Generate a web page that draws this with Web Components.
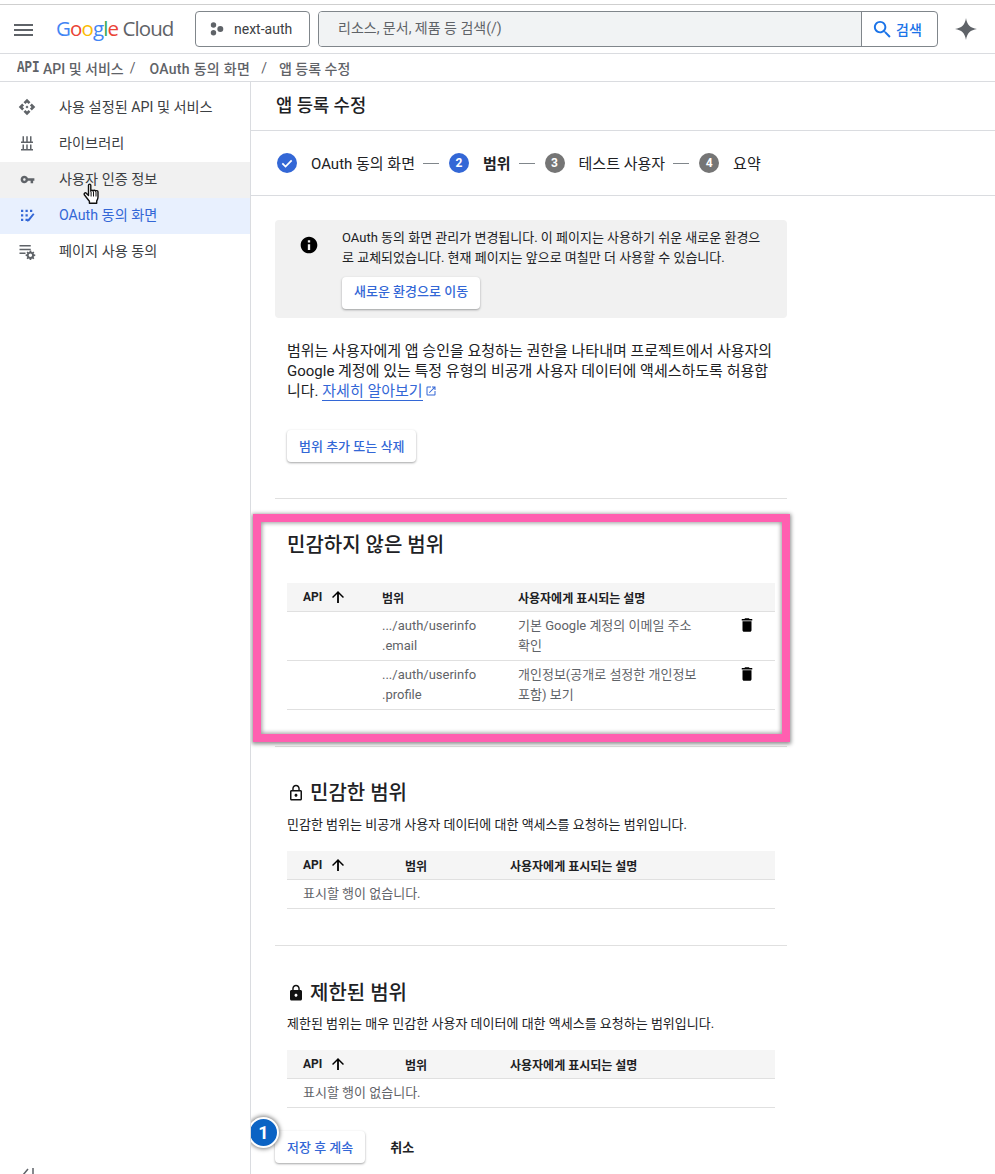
<!DOCTYPE html>
<html lang="ko">
<head>
<meta charset="utf-8">
<title>앱 등록 수정</title>
<style>
html, body { margin:0; padding:0; height:1174px; overflow:hidden; background:#fff; }
body { font-family: Roboto, "Noto Sans CJK KR", sans-serif; color:#202124; }
</style>
</head>
<body>
<gc-app>
  <gc-header slot="header"></gc-header>
  <gc-breadcrumb slot="crumbs"></gc-breadcrumb>
  <gc-sidenav slot="nav">
    <gc-nav-item icon="api">사용 설정된 API 및 서비스</gc-nav-item>
    <gc-nav-item icon="library">라이브러리</gc-nav-item>
    <gc-nav-item icon="key" size="15" hovered>사용자 인증 정보</gc-nav-item>
    <gc-nav-item icon="consent" active>OAuth 동의 화면</gc-nav-item>
    <gc-nav-item icon="agreements">페이지 사용 동의</gc-nav-item>
  </gc-sidenav>
  <gc-edit-page slot="main"></gc-edit-page>
</gc-app>

<script>
const ICONS = {
  api: '<path d="M14 12l-2 2-2-2 2-2 2 2zm-2-6l2.12 2.12 2.5-2.5L12 1 7.38 5.62l2.5 2.5L12 6zm-6 6l2.12-2.12-2.5-2.5L1 12l4.62 4.62 2.5-2.5L6 12zm12 0l-2.12 2.12 2.5 2.5L23 12l-4.62-4.62-2.5 2.5L18 12zm-6 6l-2.12-2.12-2.5 2.5L12 23l4.62-4.62-2.5-2.5L12 18z"/>',
  library: '<path d="M6 3h2v7H6zM11 3h2v7h-2zM16 3h2v7h-2zM4 10h16v2H4zM6 14h2v6H6zM11 14h2v6h-2zM16 14h2v6h-2zM4 20h16v2H4z"/>',
  key: '<path d="M12.65 10C11.83 7.67 9.61 6 7 6c-3.31 0-6 2.69-6 6s2.69 6 6 6c2.61 0 4.83-1.67 5.65-4H17v4h4v-4h2v-4H12.65zM7 14c-1.1 0-2-.9-2-2s.9-2 2-2 2 .9 2 2-.9 2-2 2z"/>',
  consent: '<path d="M4 5h3v3H4zM10 5h3v3h-3zM16 5h3v3h-3zM4 11h3v3H4zM10 11h3v3h-3zM4 17h3v3H4zM10 17h3v3h-3zM20 9.500l2 1.600-7 9-3 1 1-3z"/>',
  agreements: '<path d="M2 4h15v2H2zM2 9h15v2H2zM2 14h8v2H2z"/><path d="M23 18.700v-2l-1.700-.3a4 4 0 0 0-.5-1.100l1-1.400-1.400-1.400-1.400 1a4 4 0 0 0-1.100-.5l-.3-1.700h-2l-.3 1.700a4 4 0 0 0-1.100.5l-1.400-1-1.400 1.400 1 1.400a4 4 0 0 0-.5 1.100l-1.700.3v2l1.700.3c.1.4.3.8.5 1.100l-1 1.400 1.400 1.400 1.400-1c.3.2.7.4 1.100.5l.3 1.700h2l.3-1.700c.4-.1.8-.3 1.100-.5l1.400 1 1.400-1.400-1-1.400c.2-.3.4-.7.5-1.100zm-6.500 1.300a2.300 2.300 0 1 1 0-4.600 2.300 2.300 0 0 1 0 4.600z"/>',
  search: '<path d="M15.500 14h-.79l-.28-.27C15.410 12.590 16 11.110 16 9.500 16 5.910 13.090 3 9.500 3S3 5.910 3 9.500 5.910 16 9.500 16c1.610 0 3.090-.59 4.230-1.570l.27.28v.79l5 4.990L20.490 19l-4.990-5zm-6 0C7.010 14 5 11.990 5 9.500S7.010 5 9.500 5 14 7.010 14 9.500 11.990 14 9.500 14z"/>',
  info: '<path d="M12 2C6.480 2 2 6.480 2 12s4.480 10 10 10 10-4.480 10-10S17.520 2 12 2zm1.400 16h-2.800v-7h2.800v7zm0-9h-2.800V6.200h2.800V9z"/>',
  trash: '<path d="M6 19c0 1.100.9 2 2 2h8c1.100 0 2-.9 2-2V7H6v12zM19 4h-3.500l-1-1h-5l-1 1H5v2h14V4z"/>',
  up: '<path d="M4 12l1.410 1.410L10.800 8v12h2.400V8l5.380 5.420L20 12l-8-8-8 8z"/>',
  lockOutline: '<path d="M12 17c1.100 0 2-.9 2-2s-.9-2-2-2-2 .9-2 2 .9 2 2 2zm6-9h-1V6c0-2.760-2.240-5-5-5S7 3.240 7 6v2H6c-1.100 0-2 .9-2 2v10c0 1.100.9 2 2 2h12c1.100 0 2-.9 2-2V10c0-1.100-.9-2-2-2zM8.900 6c0-1.710 1.390-3.100 3.100-3.100s3.100 1.390 3.100 3.100v2H8.900V6zM18 20H6V10h12v10z"/>',
  lock: '<path d="M18 8h-1V6c0-2.760-2.240-5-5-5S7 3.240 7 6v2H6c-1.100 0-2 .9-2 2v10c0 1.100.9 2 2 2h12c1.100 0 2-.9 2-2V10c0-1.100-.9-2-2-2zm-6 9c-1.100 0-2-.9-2-2s.9-2 2-2 2 .9 2 2-.9 2-2 2zm3.100-9H8.900V6c0-1.710 1.390-3.100 3.100-3.100 1.710 0 3.100 1.390 3.100 3.100v2z"/>',
  external: '<path d="M19 19H5V5h7V3H5a2 2 0 0 0-2 2v14a2 2 0 0 0 2 2h14c1.100 0 2-.9 2-2v-7h-2v7zM14 3v2h3.590l-9.830 9.830 1.410 1.410L19 6.410V10h2V3h-7z"/>',
  spark: '<path d="M12 1c.8 6.500 4.500 10.200 11 11-6.500.8-10.200 4.500-11 11-.8-6.500-4.500-10.200-11-11 6.500-.8 10.200-4.500 11-11z"/>'
};
const icon = (name, size, color) =>
  `<svg width="${size}" height="${size}" viewBox="0 0 24 24" fill="${color || 'currentColor'}" style="display:block;flex:none">${ICONS[name]}</svg>`;

class GcApp extends HTMLElement{
  constructor(){
    super();
    this.shadow = this.attachShadow({mode:'open'});
    this.shadow.innerHTML = `
    <style>
    :host{ display:block; height:1174px; overflow:hidden; padding-top:4px; box-sizing:border-box; }
    .body{ display:grid; grid-template-columns:251px 1fr; height:1092px; }
    </style>
    <slot name="header"></slot>
    <slot name="crumbs"></slot>
    <div class="body">
      <slot name="nav"></slot>
      <slot name="main"></slot>
    </div>`;
  }
}

class GcHeader extends HTMLElement{
  constructor(){
    super();
    this.shadow = this.attachShadow({mode:'open'});
    this.shadow.innerHTML = `
    <style>
    :host{ display:flex; align-items:center; height:50px; box-sizing:border-box; border-top:1px solid #cfcfcf; border-bottom:1px solid #dadce0; font-family:Roboto,"Noto Sans CJK KR",sans-serif; }
    .menu{ width:19px; height:12px; margin-left:14px; margin-top:1px; border-top:2px solid #5f6368; border-bottom:2px solid #5f6368; box-sizing:border-box; }
    .menu::after{ content:''; display:block; height:2px; background:#5f6368; margin-top:3px; }
    .logo{ margin:-2px 0 0 23px; width:139px; font-family:"Open Sans",sans-serif; font-size:20.500px; letter-spacing:-.9px; color:#5f6368; white-space:nowrap; }
    .b{color:#4285f4}.r{color:#ea4335}.y{color:#fbbc04}.g{color:#34a853}
    .project{ display:flex; align-items:center; height:36px; width:115px; box-sizing:border-box; border:1px solid #80868b; border-radius:4px; padding-left:14px; gap:10px; font-size:14px; color:#3c4043; }
    .dots{ width:14px; height:14px; flex:none; }
    .search{ display:flex; height:36px; width:620px; margin-left:8px; box-sizing:border-box; border:1px solid #80868b; border-radius:4px; }
    .field{ flex:1; background:#f1f3f4; border-radius:3px 0 0 3px; padding-left:19px; font-size:14px; line-height:33px; color:#5f6368; }
    .go{ width:76px; border-left:1px solid #80868b; display:flex; align-items:center; gap:2px; color:#1a73e8; font-size:14px; font-weight:500; padding-left:9px; box-sizing:border-box; }
    .spark{ margin-left:16px; }
    </style>
    <div class="menu"></div>
    <div class="logo"><span class="b">G</span><span class="r">o</span><span class="y">o</span><span class="b">g</span><span class="g">l</span><span class="r">e</span> Cloud</div>
    <div class="project">
      <svg class="dots" viewBox="0 0 14 14" fill="#5f6368"><circle cx="3.500" cy="3" r="2.700"/><circle cx="3.500" cy="10.800" r="2.700"/><circle cx="10.300" cy="7" r="3"/></svg>
      <span>next-auth</span>
    </div>
    <div class="search">
      <div class="field">리소스, 문서, 제품 등 검색(/)</div>
      <div class="go">${icon('search',23,'#1a73e8')}<span>검색</span></div>
    </div>
    <div class="spark">${icon('spark',24,'#5f6368')}</div>`;
  }
}

class GcBreadcrumb extends HTMLElement{
  constructor(){
    super();
    this.shadow = this.attachShadow({mode:'open'});
    this.shadow.innerHTML = `
    <style>
    :host{ display:flex; align-items:center; height:28px; box-sizing:border-box; border-bottom:1px solid #dadce0; padding-left:17px; font-size:14px; font-weight:500; color:#5f6368; font-family:Roboto,"Noto Sans CJK KR",sans-serif; white-space:nowrap; }
    .api{ font-family:"Liberation Mono",monospace; font-weight:700; font-size:17px; line-height:20px; width:20px; margin-right:6px; display:inline-block; transform:scaleX(.74); transform-origin:0 50%; }
    .sep{ font-weight:400; margin:0 14px 0 6px; }
    .wide{ letter-spacing:.3px; }
    </style>
    <span class="api">API</span>
    <span>API 및 서비스</span><span class="sep">/</span>
    <span class="wide">OAuth 동의 화면</span><span class="sep" style="margin:0 12px 0 11px">/</span>
    <span>앱 등록 수정</span>`;
  }
}

class GcSidenav extends HTMLElement{
  constructor(){
    super();
    this.shadow = this.attachShadow({mode:'open'});
    this.shadow.innerHTML = `
    <style>
    :host{ display:flex; flex-direction:column; box-sizing:border-box; border-right:1px solid #dadce0; padding-top:8px; height:1092px; }
    .fill{ flex:1; }
    .collapse{ height:7px; padding-left:20px; color:#5f6368; }
    </style>
    <slot></slot>
    <div class="fill"></div>
    <div class="collapse">
      <svg width="16" height="14" viewBox="0 0 16 14" fill="none" stroke="#5f6368" stroke-width="1.500"><path d="M8 1L3 7l5 6M13 0v14"/></svg>
    </div>`;
  }
}

class GcNavItem extends HTMLElement{
  constructor(){
    super();
    this.shadow = this.attachShadow({mode:'open'});
    const name = this.getAttribute('icon');
    const size = this.getAttribute('size') || 18;
    this.shadow.innerHTML = `
    <style>
    :host{ display:flex; align-items:center; position:relative; height:36px; box-sizing:border-box; padding:0 0 2px 18px; gap:23px; font-size:14.200px; line-height:20px; color:#3c4043; white-space:nowrap; font-family:Roboto,"Noto Sans CJK KR",sans-serif; }
    :host([hovered]){ background:#f1f1f1; z-index:1; }
    :host([active]){ background:#e8f0fe; color:#3367d6; }
    .ic{ color:#5f6368; width:18px; display:flex; justify-content:center; }
    :host([active]) .ic{ color:#3367d6; }
    .hand{ position:absolute; left:83px; top:20px; }
    </style>
    <span class="ic">${icon(name,size)}</span>
    <span class="text"><slot></slot></span>
    ${this.hasAttribute('hovered') ? `<svg class="hand" width="20" height="24" viewBox="0 0 20 24"><path d="M5.500 3.200c0-1.500 2.300-1.500 2.300 0v6c.2-1.300 2.300-1.300 2.400 0 .2-1.200 2.300-1.200 2.400.1.3-1 2.300-.9 2.400.4v5.200c0 2-.6 3-1.300 4.100v2.200H6.400v-2C5 17.700 3 14.900 1.500 13c-1-1.500.8-2.900 2-1.600l2 2V3.200z" fill="#fff" stroke="#111" stroke-width="1.400" stroke-linejoin="round"/><path d="M8.100 10v4.500M10.500 10v4.500M13 10v4.500" stroke="#111" stroke-width="1"/></svg>` : ''}`;
  }
}

class GcStepper extends HTMLElement{
  constructor(){
    super();
    this.shadow = this.attachShadow({mode:'open'});
    this.shadow.innerHTML = `
    <style>
    :host{ display:flex; align-items:center; height:65px; box-sizing:border-box; padding-left:26px; font-size:15px; color:#202124; white-space:nowrap; font-family:Roboto,"Noto Sans CJK KR",sans-serif; border-bottom:1px solid #dadce0; }
    .c{ width:20px; height:20px; border-radius:50%; background:#3367d6; color:#fff; font-size:12px; font-weight:700; display:flex; align-items:center; justify-content:center; flex:none; margin-right:14px; }
    .c.off{ background:#757575; }
    .line{ width:16px; height:1px; background:#80868b; margin:0 10px 0 8px; flex:none; }
    span:not(.c):not(.line), b{ margin-top:-1px; }
    b{ font-weight:700; }
    </style>
    <span class="c"><svg width="14" height="14" viewBox="0 0 24 24" fill="none" stroke="#fff" stroke-width="3"><path d="M4 12.500l5.500 5.500L20 7.500"/></svg></span><span>OAuth 동의 화면</span><span class="line"></span>
    <span class="c">2</span><b>범위</b><span class="line"></span>
    <span class="c off">3</span><span>테스트 사용자</span><span class="line"></span>
    <span class="c off">4</span><span>요약</span>`;
  }
}

class GcButton extends HTMLElement{
  constructor(){
    super();
    this.shadow = this.attachShadow({mode:'open'});
    this.shadow.innerHTML = `
    <style>
    :host{ display:inline-flex; align-items:center; height:32px; padding:0 12px 2px; box-sizing:border-box; background:#fff; border-radius:4px; color:#3367d6; font-size:13px; font-weight:500; white-space:nowrap; box-shadow:0 1px 2px rgba(60,64,67,.35),0 1px 3px rgba(60,64,67,.15); font-family:Roboto,"Noto Sans CJK KR",sans-serif; }
    :host([flat]){ background:none; box-shadow:none; color:#202124; font-weight:700; }
    </style>
    <slot></slot>`;
  }
}

class GcBanner extends HTMLElement{
  constructor(){
    super();
    this.shadow = this.attachShadow({mode:'open'});
    this.shadow.innerHTML = `
    <style>
    :host{ display:flex; height:98px; box-sizing:border-box; background:#f1f1f1; border-radius:4px; padding:8px 0 0 24px; font-size:13px; line-height:20px; color:#202124; font-family:Roboto,"Noto Sans CJK KR",sans-serif; }
    .ic{ width:20px; margin-top:7px; margin-right:23px; flex:none; }
    .text{ width:423px; word-break:break-all; }
    .action{ margin-top:9px; }
    </style>
    <div class="ic">${icon('info',20,'#000')}</div>
    <div>
      <div class="text"><slot></slot></div>
      <div class="action"><slot name="action"></slot></div>
    </div>`;
  }
}

class GcScopeTable extends HTMLElement{
  constructor(){
    super();
    this.shadow = this.attachShadow({mode:'open'});
    const empty = this.hasAttribute('empty');
    const cols = empty ? '102px 105px 1fr' : '79px 136px 1fr';
    this.shadow.innerHTML = `
    <style>
    :host{ display:block; margin:0 12px; font-size:12px; font-family:Roboto,"Noto Sans CJK KR",sans-serif; }
    .head{ display:grid; grid-template-columns:${cols}; align-items:center; height:29px; box-sizing:border-box; padding-left:16px; background:#f5f5f5; border-bottom:1px solid #e0e0e0; font-weight:700; color:#202124; }
    .api{ display:flex; align-items:center; gap:7px; }
    .none{ height:29px; box-sizing:border-box; padding-left:16px; line-height:28px; font-size:13px; color:#5f6368; border-bottom:1px solid #e0e0e0; }
    </style>
    <div class="head">
      <span class="api">API ${icon('up',18,'#000')}</span>
      <span>범위</span>
      <span>사용자에게 표시되는 설명</span>
    </div>
    ${empty ? '<div class="none">표시할 행이 없습니다.</div>' : '<slot></slot>'}`;
  }
}

class GcScopeRow extends HTMLElement{
  constructor(){
    super();
    this.shadow = this.attachShadow({mode:'open'});
    this.shadow.innerHTML = `
    <style>
    :host{ display:grid; grid-template-columns:136px 1fr 37px; height:49px; box-sizing:border-box; padding:4px 0 0 95px; line-height:20px; font-size:13px; color:#5f6368; border-bottom:1px solid #e0e0e0; font-family:Roboto,"Noto Sans CJK KR",sans-serif; }
    .desc{ width:183px; }
    </style>
    <div class="scope"><slot name="scope"></slot></div>
    <div class="desc"><slot name="desc"></slot></div>
    <div class="del">${icon('trash',18,'#000')}</div>`;
  }
}

class GcScopeSection extends HTMLElement{
  constructor(){
    super();
    this.shadow = this.attachShadow({mode:'open'});
    const name = this.getAttribute('icon');
    this.shadow.innerHTML = `
    <style>
    :host{ display:block; font-family:Roboto,"Noto Sans CJK KR",sans-serif; }
    h2{ display:flex; align-items:center; gap:5px; margin:0 0 0 12px; font-size:20px; line-height:28px; font-weight:500; color:#202124; white-space:nowrap; }
    p{ margin:0 0 0 12px; padding:8px 0 16px; font-size:13px; line-height:20px; color:#202124; white-space:nowrap; }
    :host(.s3) p{ padding-top:7px; }
    </style>
    <h2>${name ? icon(name,18,'#111') : ''}<slot name="title"></slot></h2>
    <p><slot name="note"></slot></p>
    <slot></slot>`;
  }
}

class GcEditPage extends HTMLElement{
  constructor(){
    super();
    this.shadow = this.attachShadow({mode:'open'});
    this.shadow.innerHTML = `
    <style>
    :host{ display:block; position:relative; height:1092px; overflow:hidden; font-family:Roboto,"Noto Sans CJK KR",sans-serif; color:#202124; }
    .title{ height:49px; box-sizing:border-box; border-bottom:1px solid #dadce0; padding-left:25px; font-size:17.700px; font-weight:500; line-height:48px; white-space:nowrap; }
    .content{ padding:24px 0 0 24px; width:512px; }
    .intro{ margin:23px 0 0 12px; width:490px; font-size:15px; line-height:20px; word-break:break-all; color:#202124; }
    .intro a{ color:#3367d6; text-decoration:none; border-bottom:1px solid #3367d6; }
    .intro svg{ display:inline-block; vertical-align:-1px; margin-left:2px; }
    .add{ margin:29px 0 0 12px; height:32px; }
    hr{ border:0; height:1px; background:#e0e0e0; margin:0; }
    .h1{ margin-top:36px; }
    .s1{ margin-top:32px; }
    .s2{ margin-top:32px; }
    .s3{ margin-top:33px; }
    .actions{ display:flex; align-items:center; gap:13px; margin-top:23px; }
    .outline{ position:absolute; left:2px; top:432px; width:537px; height:228px; box-sizing:border-box; border:8px solid #ff5fb0; box-shadow:0 1px 4px 1px rgba(0,0,0,.45), inset 0 0 4px 1px rgba(0,0,0,.4); pointer-events:none; }
    .badge{ position:absolute; left:-3px; top:1035px; width:27px; height:27px; border:2px solid #fff; border-radius:50%; background:#0b63c4; color:#fff; font-size:18px; font-weight:700; display:flex; align-items:center; justify-content:center; box-shadow:0 0 4px 1px rgba(0,0,0,.5); box-sizing:content-box; }
    </style>
    <div class="title">앱 등록 수정</div>
    <gc-stepper></gc-stepper>
    <div class="content">
      <gc-banner>
        OAuth 동의 화면 관리가 변경됩니다. 이 페이지는 사용하기 쉬운 새로운 환경으로 교체되었습니다. 현재 페이지는 앞으로 며칠만 더 사용할 수 있습니다.
        <gc-button slot="action">새로운 환경으로 이동</gc-button>
      </gc-banner>
      <div class="intro">
        <div>범위는 사용자에게 앱 승인을 요청하는 권한을 나타내며 프로젝트에서 사용자의 Google 계정에 있는 특정 유형의 비공개 사용자 데이터에 액세스하도록 허용합</div>
        <div>니다. <a>자세히 알아보기</a><svg width="12" height="12" viewBox="0 0 24 24" fill="#3367d6">${ICONS.external}</svg></div>
      </div>
      <div class="add"><gc-button>범위 추가 또는 삭제</gc-button></div>
      <hr class="h1">
      <gc-scope-section class="s1">
        <span slot="title">민감하지 않은 범위</span>
        <gc-scope-table>
          <gc-scope-row>
            <span slot="scope">.../auth/userinfo<br>.email</span>
            <span slot="desc">기본 Google 계정의 이메일 주소 확인</span>
          </gc-scope-row>
          <gc-scope-row>
            <span slot="scope">.../auth/userinfo<br>.profile</span>
            <span slot="desc">개인정보(공개로 설정한 개인정보 포함) 보기</span>
          </gc-scope-row>
        </gc-scope-table>
      </gc-scope-section>
      <hr style="margin-top:36px">
      <gc-scope-section class="s2" icon="lockOutline">
        <span slot="title">민감한 범위</span>
        <span slot="note">민감한 범위는 비공개 사용자 데이터에 대한 액세스를 요청하는 범위입니다.</span>
        <gc-scope-table empty></gc-scope-table>
      </gc-scope-section>
      <hr style="margin-top:36px">
      <gc-scope-section class="s3" icon="lock">
        <span slot="title">제한된 범위</span>
        <span slot="note">제한된 범위는 매우 민감한 사용자 데이터에 대한 액세스를 요청하는 범위입니다.</span>
        <gc-scope-table empty></gc-scope-table>
      </gc-scope-section>
      <div class="actions">
        <gc-button>저장 후 계속</gc-button>
        <gc-button flat>취소</gc-button>
      </div>
    </div>
    <div class="outline"></div>
    <div class="badge">1</div>`;
  }
}

customElements.define('gc-app', GcApp);
customElements.define('gc-header', GcHeader);
customElements.define('gc-breadcrumb', GcBreadcrumb);
customElements.define('gc-sidenav', GcSidenav);
customElements.define('gc-nav-item', GcNavItem);
customElements.define('gc-stepper', GcStepper);
customElements.define('gc-button', GcButton);
customElements.define('gc-banner', GcBanner);
customElements.define('gc-scope-table', GcScopeTable);
customElements.define('gc-scope-row', GcScopeRow);
customElements.define('gc-scope-section', GcScopeSection);
customElements.define('gc-edit-page', GcEditPage);
</script>
</body>
</html>
